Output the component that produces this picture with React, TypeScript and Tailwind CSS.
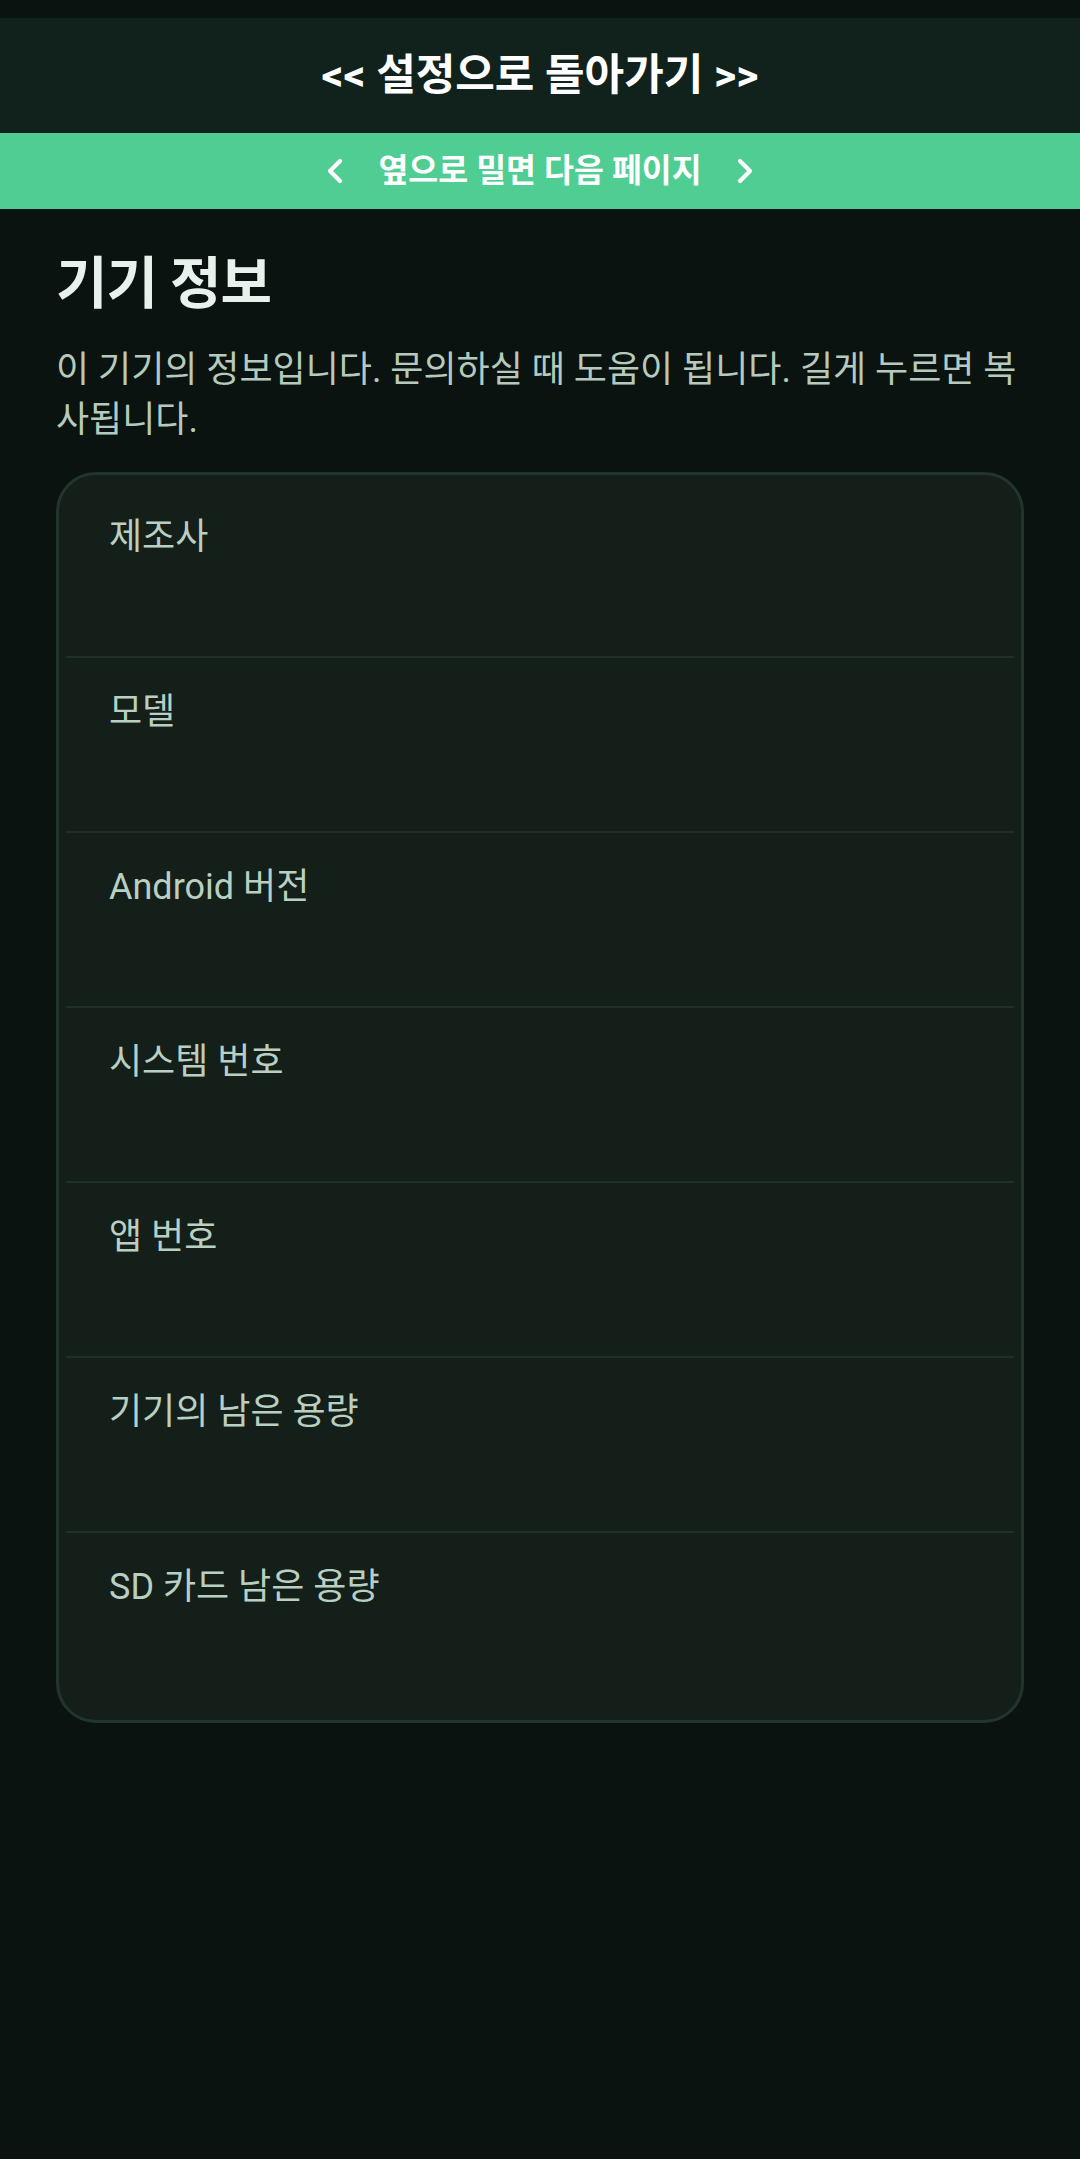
import React from "react";

const rows = [
  "제조사",
  "모델",
  "Android 버전",
  "시스템 번호",
  "앱 번호",
  "기기의 남은 용량",
  "SD 카드 남은 용량",
];

function Chevron({ dir }: { dir: "left" | "right" }) {
  return (
    <svg width="18" height="26" viewBox="0 0 18 26" fill="none">
      <polyline
        points={dir === "left" ? "14,3 4,13 14,23" : "4,3 14,13 4,23"}
        stroke="white"
        strokeWidth="4.2"
        strokeLinecap="round"
        strokeLinejoin="round"
      />
    </svg>
  );
}

export default function App() {
  return (
    <div
      className="min-h-[2159px] w-[1080px] bg-[#0a130f]"
      style={{ fontFamily: "Roboto, 'Noto Sans CJK KR', sans-serif" }}
    >
      <div className="h-[18px] bg-[#0a130f]" />
      <div className="flex h-[115px] items-center justify-center bg-[#10221b]">
        <span className="text-[43px] font-bold leading-none text-white">
          &lt;&lt; 설정으로 돌아가기 &gt;&gt;
        </span>
      </div>
      <div className="flex h-[76px] items-center justify-center gap-[34px] bg-[#50cd93]">
        <Chevron dir="left" />
        <span className="text-[32.5px] font-bold leading-none text-white">
          옆으로 밀면 다음 페이지
        </span>
        <Chevron dir="right" />
      </div>

      <div className="px-[56px]">
        <h1 className="pt-[42px] text-[56px] font-bold leading-[67px] tracking-[-1px] text-[#e8f2ec]">
          기기 정보
        </h1>
        <p className="mt-[27px] whitespace-nowrap text-[36px] leading-[50px] text-[#b5cabd]">
          이 기기의 정보입니다. 문의하실 때 도움이 됩니다. 길게 누르면 복
          <br />
          사됩니다.
        </p>

        <div className="mt-[27px] rounded-[40px] border-[3px] border-[#22352d] bg-[#141f1a] px-[7px] pb-[14px] pt-[8px]">
          {rows.map((label, i) => (
            <div
              key={label}
              className={
                i > 0
                  ? "h-[175px] border-t-2 border-[#1f302a] px-[43px] pt-[30px]"
                  : "h-[173px] px-[43px] pt-[30px]"
              }
            >
              <div className="text-[36px] leading-[48px] text-[#b9cfc2]">
                {label}
              </div>
            </div>
          ))}
        </div>
      </div>
    </div>
  );
}
